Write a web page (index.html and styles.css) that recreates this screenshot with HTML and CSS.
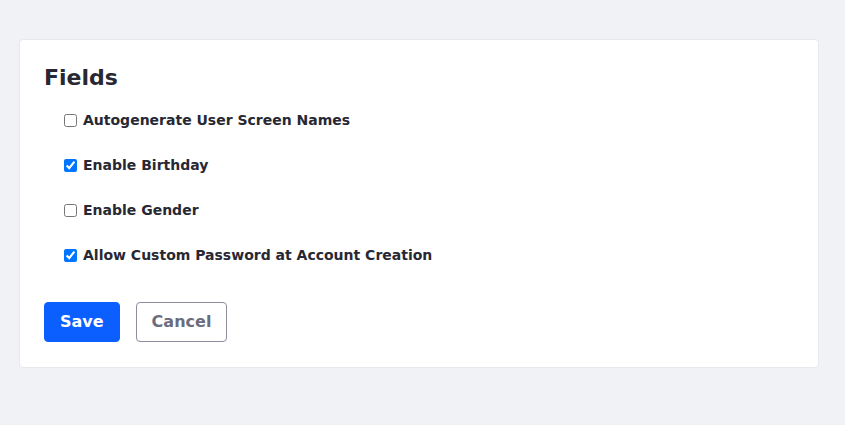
FILE: index.html
```html
<!DOCTYPE html>
<html lang="en">
<head>
<meta charset="utf-8">
<title>Fields</title>
<link rel="stylesheet" href="styles.css">
</head>
<body>
<main class="page">
  <section class="sheet">
    <h2 class="sheet-title">Fields</h2>
    <div class="field-list">
      <label class="check-row"><input type="checkbox" class="check"><span>Autogenerate User Screen Names</span></label>
      <label class="check-row"><input type="checkbox" class="check" checked><span>Enable Birthday</span></label>
      <label class="check-row"><input type="checkbox" class="check"><span>Enable Gender</span></label>
      <label class="check-row"><input type="checkbox" class="check" checked><span>Allow Custom Password at Account Creation</span></label>
    </div>
    <div class="actions">
      <button class="btn btn-primary" type="button">Save</button>
      <button class="btn btn-secondary" type="button">Cancel</button>
    </div>
  </section>
</main>
</body>
</html>
```

FILE: styles.css
```css
html, body {
  margin: 0;
  padding: 0;
  background: #f1f2f5;
  font-family: "DejaVu Sans", "Liberation Sans", sans-serif;
  color: #272833;
}

.page {
  padding: 39px 26px 0 19px;
}

.sheet {
  background: #fff;
  border: 1px solid #e7e7ed;
  border-radius: 4px;
  padding: 25px 24px 25px;
}

.sheet-title {
  margin: 0 0 19px;
  font-size: 22px;
  line-height: 1.2;
  font-weight: 700;
  color: #272833;
}

.field-list {
  display: flex;
  flex-direction: column;
  gap: 24px;
  padding-left: 20px;
}

.check-row {
  display: flex;
  align-items: center;
  gap: 6px;
  font-size: 14px;
  line-height: 21px;
  font-weight: 700;
}

.check {
  margin: 0;
  width: 13px;
  height: 13px;
}

.actions {
  display: flex;
  gap: 16px;
  margin-top: 36px;
}

.btn {
  font-family: inherit;
  font-size: 16px;
  font-weight: 700;
  line-height: 24px;
  padding: 7px 15px;
  border-radius: 4px;
  border: 1px solid transparent;
  cursor: pointer;
}

.btn-primary {
  background: #0b5fff;
  border-color: #0b5fff;
  color: #fff;
}

.btn-secondary {
  background: #fff;
  border-color: #8b8c9d;
  color: #6b6c7e;
}
```
